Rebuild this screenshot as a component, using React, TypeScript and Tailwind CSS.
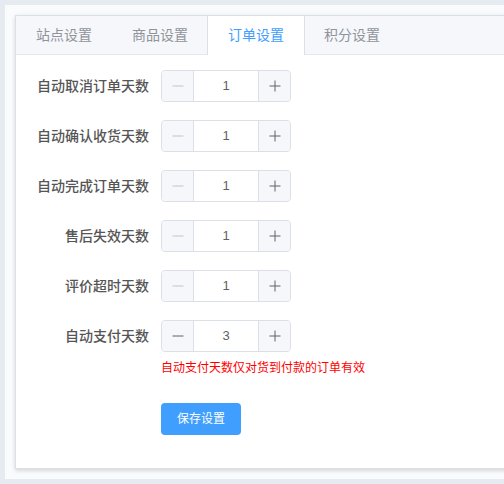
const font = {
  fontFamily: '"Liberation Sans", "Noto Sans CJK SC", sans-serif',
};

const tabs = ["站点设置", "商品设置", "订单设置", "积分设置"];

const rows = [
  { label: "自动取消订单天数", value: 1 },
  { label: "自动确认收货天数", value: 1 },
  { label: "自动完成订单天数", value: 1 },
  { label: "售后失效天数", value: 1 },
  { label: "评价超时天数", value: 1 },
  { label: "自动支付天数", value: 3 },
];

function MinusIcon({ color }: { color: string }) {
  return (
    <svg width="12" height="12" viewBox="0 0 12 12">
      <line x1="0.5" y1="6" x2="11.5" y2="6" stroke={color} strokeWidth="1" />
    </svg>
  );
}

function PlusIcon({ color }: { color: string }) {
  return (
    <svg width="12" height="12" viewBox="0 0 12 12">
      <line x1="0.5" y1="6" x2="11.5" y2="6" stroke={color} strokeWidth="1" />
      <line x1="6" y1="0.5" x2="6" y2="11.5" stroke={color} strokeWidth="1" />
    </svg>
  );
}

function NumberInput({ value }: { value: number }) {
  const minDisabled = value <= 1;
  return (
    <div className="flex w-[130px] h-8 rounded border border-[#dcdfe6] bg-white">
      <div className="flex w-[32px] items-center justify-center rounded-l bg-[#f5f7fa] border-r border-[#dcdfe6]">
        <MinusIcon color={minDisabled ? "#c0c4cc" : "#606266"} />
      </div>
      <div className="flex flex-1 items-center justify-center text-[13px] text-[#606266]">
        {value}
      </div>
      <div className="flex w-[32px] items-center justify-center rounded-r bg-[#f5f7fa] border-l border-[#dcdfe6]">
        <PlusIcon color="#606266" />
      </div>
    </div>
  );
}

export default function App() {
  return (
    <div className="w-[504px] h-[484px] overflow-hidden bg-[#e6ebf1]" style={font}>
      <div className="ml-[5px] mt-[5px] w-[540px] bg-[#fafbfc] p-[10px]">
        <div className="border border-[#dcdfe6] bg-white shadow-[0_2px_4px_0_rgba(0,0,0,0.12),0_0_6px_0_rgba(0,0,0,0.04)]">
          {/* Tabs */}
          <div className="flex items-start bg-[#f5f7fa] border-b border-[#e4e7ed]">
            {tabs.map((t, i) =>
              i === 2 ? (
                <div
                  key={t}
                  className="h-[39px] -mb-px -mx-px px-5 flex items-center bg-white border-x border-[#dcdfe6] text-[14px] text-[#409eff]"
                >
                  {t}
                </div>
              ) : (
                <div
                  key={t}
                  className="h-[38px] px-5 flex items-center text-[14px] text-[#909399]"
                >
                  {t}
                </div>
              )
            )}
          </div>

          {/* Form */}
          <div className="p-[15px]">
            {rows.map((r, i) => (
              <div key={r.label} className="mb-[18px]">
                <div className="flex items-center h-8">
                  <label className="w-[130px] pr-3 text-right text-[14px] font-medium text-[#555]">
                    {r.label}
                  </label>
                  <NumberInput value={r.value} />
                </div>
                {i === rows.length - 1 && (
                  <div className="ml-[130px] pt-[7px] pb-[8px] text-[12px] leading-[18px] text-[#ff0000]">
                    自动支付天数仅对货到付款的订单有效
                  </div>
                )}
              </div>
            ))}
            <div className="ml-[130px] mb-[18px]">
              <button className="w-20 h-8 rounded bg-[#409eff] text-[12px] text-white">
                保存设置
              </button>
            </div>
          </div>
        </div>
      </div>
    </div>
  );
}
